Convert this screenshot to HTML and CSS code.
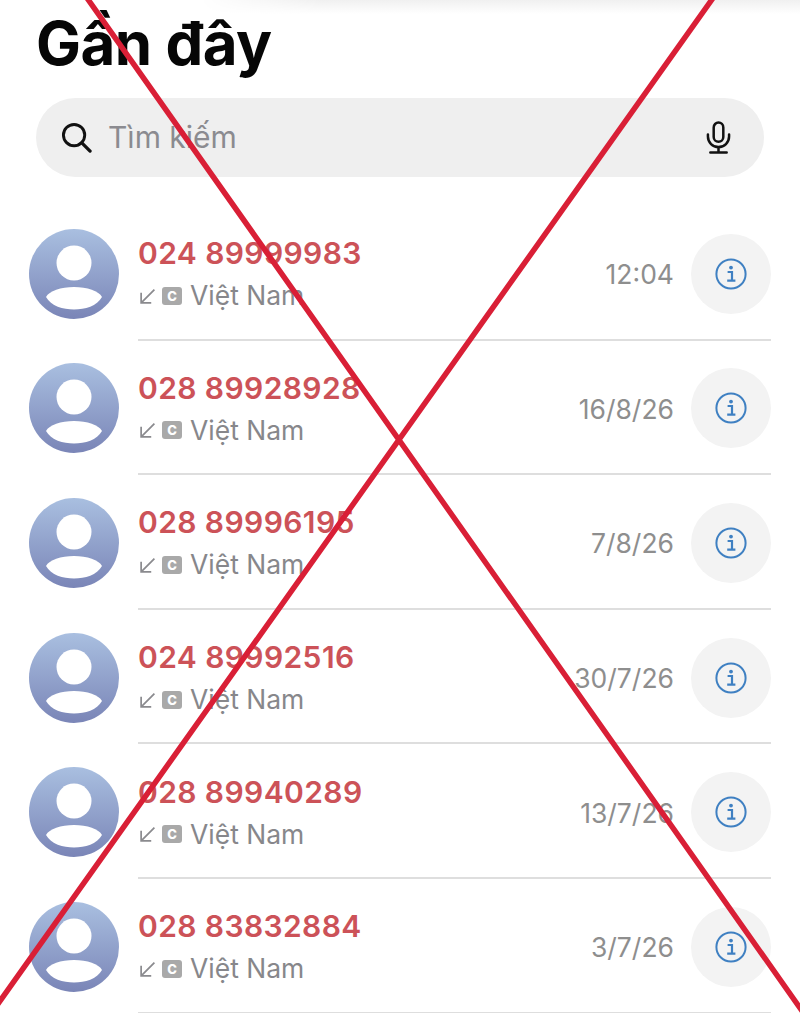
FILE: index.html
```html
<!DOCTYPE html>
<html lang="vi">
<head>
  <meta charset="UTF-8">
  <meta name="viewport" content="width=device-width, initial-scale=1.0">
  <title>Gần đây</title>
  <link rel="stylesheet" href="styles.css">
</head>
<body>

  <svg class="defs" width="0" height="0" aria-hidden="true">
    <defs>
      <linearGradient id="avatarFill" x1="0" y1="0" x2="0" y2="1">
        <stop offset="0" stop-color="#a9bfe0"/>
        <stop offset="1" stop-color="#7a85b7"/>
      </linearGradient>
    </defs>
    <symbol id="avatar" viewBox="0 0 90 90">
      <circle cx="45" cy="45" r="45" fill="url(#avatarFill)"/>
      <circle cx="45" cy="34" r="17.5" fill="#fff"/>
      <path d="M17 68C20 62 32 58 45 58C58 58 70 62 73 68C68 77 56 80.5 45 80.5C34 80.5 22 77 17 68Z" fill="#fff"/>
    </symbol>
    <symbol id="incoming" viewBox="0 0 16 16">
      <path d="M14.5 1.5L2.5 13.5M2 4.5V14H11.5" fill="none" stroke="#8a8a8e" stroke-width="1.6"/>
    </symbol>
    <symbol id="info" viewBox="0 0 32 32">
      <circle cx="16" cy="16" r="14.6" fill="none" stroke="#3f80c2" stroke-width="2"/>
      <circle cx="16" cy="9.6" r="1.9" fill="#3f80c2"/>
      <path d="M12.6 14H17V22.4M12.2 22.6H20.4" fill="none" stroke="#3f80c2" stroke-width="2.2"/>
    </symbol>
  </svg>

  <!-- Tiêu đề -->
  <div class="top-fade"></div>
  <h1 class="title">Gần đây</h1>

  <!-- Ô tìm kiếm -->
  <div class="search">
    <svg class="search-icon" viewBox="0 0 32 32">
      <circle cx="13.5" cy="13.5" r="11" fill="none" stroke="#111" stroke-width="3"/>
      <path d="M21.5 21.5L30 30" stroke="#111" stroke-width="3.4" stroke-linecap="round"/>
    </svg>
    <span class="search-text">Tìm kiếm</span>
    <svg class="mic-icon" viewBox="0 0 26 34">
      <rect x="8" y="1.5" width="10" height="20" rx="5" fill="none" stroke="#111" stroke-width="2.6"/>
      <path d="M2 14V16A11 11 0 0 0 24 16V14M13 27V32M4.5 32.5H21.5" fill="none" stroke="#111" stroke-width="2.6" stroke-linecap="round"/>
    </svg>
  </div>

  <!-- Danh sách cuộc gọi -->
  <div class="calls">
    <div class="call">
      <svg class="avatar"><use href="#avatar"/></svg>
      <div class="call-main">
        <div class="call-number">024 89999983</div>
        <div class="call-sub"><svg class="arrow"><use href="#incoming"/></svg><span class="badge">C</span><span>Việt Nam</span></div>
      </div>
      <div class="call-time">12:04</div>
      <div class="info-btn"><svg class="info-icon"><use href="#info"/></svg></div>
    </div>
    <div class="call">
      <svg class="avatar"><use href="#avatar"/></svg>
      <div class="call-main">
        <div class="call-number">028 89928928</div>
        <div class="call-sub"><svg class="arrow"><use href="#incoming"/></svg><span class="badge">C</span><span>Việt Nam</span></div>
      </div>
      <div class="call-time">16/8/26</div>
      <div class="info-btn"><svg class="info-icon"><use href="#info"/></svg></div>
    </div>
    <div class="call">
      <svg class="avatar"><use href="#avatar"/></svg>
      <div class="call-main">
        <div class="call-number">028 89996195</div>
        <div class="call-sub"><svg class="arrow"><use href="#incoming"/></svg><span class="badge">C</span><span>Việt Nam</span></div>
      </div>
      <div class="call-time">7/8/26</div>
      <div class="info-btn"><svg class="info-icon"><use href="#info"/></svg></div>
    </div>
    <div class="call">
      <svg class="avatar"><use href="#avatar"/></svg>
      <div class="call-main">
        <div class="call-number">024 89992516</div>
        <div class="call-sub"><svg class="arrow"><use href="#incoming"/></svg><span class="badge">C</span><span>Việt Nam</span></div>
      </div>
      <div class="call-time">30/7/26</div>
      <div class="info-btn"><svg class="info-icon"><use href="#info"/></svg></div>
    </div>
    <div class="call">
      <svg class="avatar"><use href="#avatar"/></svg>
      <div class="call-main">
        <div class="call-number">028 89940289</div>
        <div class="call-sub"><svg class="arrow"><use href="#incoming"/></svg><span class="badge">C</span><span>Việt Nam</span></div>
      </div>
      <div class="call-time">13/7/26</div>
      <div class="info-btn"><svg class="info-icon"><use href="#info"/></svg></div>
    </div>
    <div class="call">
      <svg class="avatar"><use href="#avatar"/></svg>
      <div class="call-main">
        <div class="call-number">028 83832884</div>
        <div class="call-sub"><svg class="arrow"><use href="#incoming"/></svg><span class="badge">C</span><span>Việt Nam</span></div>
      </div>
      <div class="call-time">3/7/26</div>
      <div class="info-btn"><svg class="info-icon"><use href="#info"/></svg></div>
    </div>
  </div>

  <!-- Dấu X đỏ phủ lên ảnh -->
  <svg class="cross" viewBox="0 0 800 1013">
    <path d="M87 -2L805 1015M713 -2L-10 1015" stroke="#d91f36" stroke-width="5.5" fill="none"/>
  </svg>

</body>
</html>
```

FILE: styles.css
```css
html, body {
  margin: 0;
  height: 1013px;
  overflow: hidden;
}
body {
  position: relative;
  background-color: #fff;
  font-family: Inter, "Noto Sans", sans-serif;
}
.defs {
  position: absolute;
}
.top-fade {
  position: absolute;
  top: 0;
  left: 200px;
  right: 0;
  height: 14px;
  background: linear-gradient(#f0f0f0, #fff);
  mask-image: linear-gradient(90deg, transparent, #000 120px);
}
.title {
  position: relative;
  margin: 0;
  padding: 7px 0 0 36px;
  height: 89px;
  box-sizing: border-box;
  font-size: 60px;
  line-height: 72px;
  font-weight: 700;
  color: #060606;
  letter-spacing: -0.5px;
}
.search {
  display: flex;
  align-items: center;
  margin: 9px 36px 0;
  height: 79px;
  padding: 0 33px 0 25px;
  border-radius: 40px;
  background-color: #efefef;
}
.search-icon {
  width: 31px;
  height: 31px;
}
.search-text {
  flex: 1;
  margin: 0 0 2px 16px;
  font-size: 30px;
  color: #8b8b90;
}
.mic-icon {
  width: 25px;
  height: 33px;
}
.calls {
  margin-top: 29px;
}
.call {
  display: flex;
  align-items: center;
  box-sizing: border-box;
  height: 134.6px;
  padding: 1px 29px 0;
  /* đường kẻ bắt đầu từ cột chữ */
  background: linear-gradient(#dedede, #dedede) no-repeat 138px 100% / 633px 2px;
}
.avatar {
  flex: none;
  width: 90px;
  height: 90px;
  margin-right: 19px;
}
.call-main {
  flex: 1;
}
.call-number {
  font-size: 30px;
  line-height: 38px;
  font-weight: 600;
  color: #cc5258;
  letter-spacing: 0.4px;
}
.call-sub {
  display: flex;
  align-items: center;
  margin-top: 5px;
  font-size: 26.5px;
  line-height: 36px;
  color: #87878b;
}
.arrow {
  width: 17px;
  height: 17px;
  margin: 2px 6px 0 1px;
}
.badge {
  display: flex;
  align-items: center;
  justify-content: center;
  width: 20px;
  height: 18px;
  margin: 1px 8px 0 0;
  border-radius: 3px;
  background-color: #a9a9a9;
  color: #fff;
  font-size: 13px;
  line-height: 18px;
  font-weight: 800;
}
.call-time {
  margin: 1px 17px 0 0;
  font-size: 26.5px;
  color: #8e8e8e;
}
.info-btn {
  display: flex;
  align-items: center;
  justify-content: center;
  width: 80px;
  height: 80px;
  border-radius: 50%;
  background-color: #f3f3f3;
}
.info-icon {
  width: 32px;
  height: 32px;
}
.cross {
  position: absolute;
  top: 0;
  left: 0;
  width: 800px;
  height: 1013px;
  pointer-events: none;
}
```
